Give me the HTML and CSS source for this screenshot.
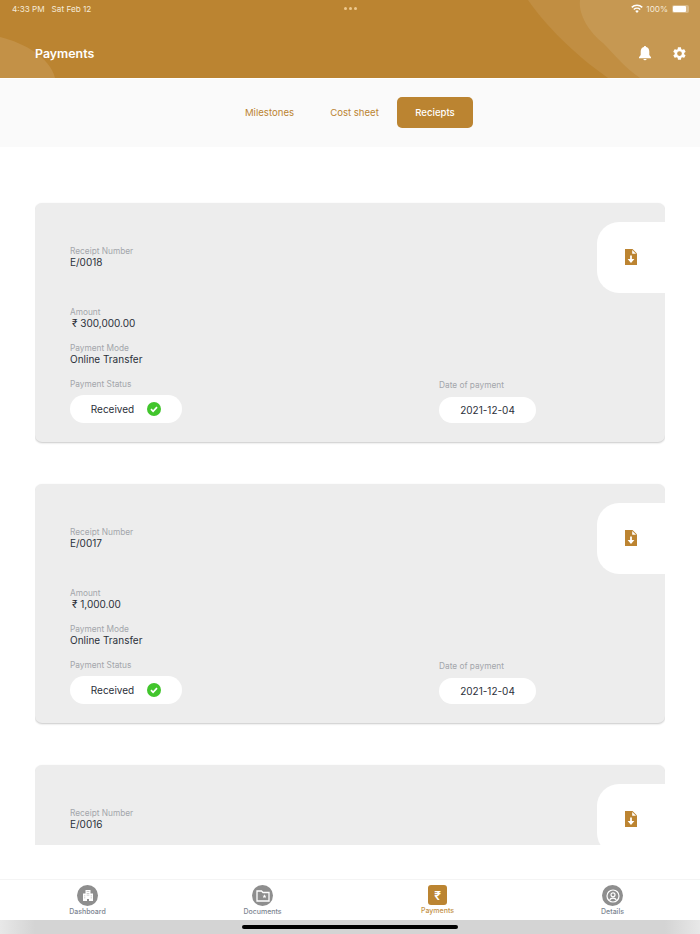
FILE: index.html
```html
<!DOCTYPE html>
<html lang="en">
<head>
  <meta charset="UTF-8">
  <title>Payments</title>
  <meta name="viewport" content="width=device-width, initial-scale=1.0">
  <link rel="stylesheet" href="styles.css">
</head>
<body>
  <div class="page">
    <header class="header">
      <svg class="header-waves" viewBox="0 0 700 78" preserveAspectRatio="none">
        <path d="M0 37C25 43 50 58 55 78H0Z" fill="#c39147"/>
        <path d="M528 0C545 25 575 55 608 78H700V0Z" fill="#c18e42"/>
        <path d="M580 0C578 15 590 33 603 43C615 55 625 68 640 78H700V0Z" fill="#c69852"/>
      </svg>
      <div class="status-bar">
        <span>4:33 PM&nbsp;&nbsp;&nbsp;Sat Feb 12</span>
        <span class="status-dots"><i></i><i></i><i></i></span>
        <span class="status-right">
          <svg width="12" height="9" viewBox="0 0 12 9"><path d="M6 9 4.2 7A2.6 2.6 0 0 1 7.8 7ZM3.3 6 2.3 4.9A5.4 5.4 0 0 1 9.7 4.9L8.7 6A4 4 0 0 0 3.3 6ZM1.3 3.9.2 2.8A8.4 8.4 0 0 1 11.8 2.8L10.7 3.9A6.9 6.9 0 0 0 1.3 3.9Z" fill="#fff"/></svg>
          100%
          <span class="battery"><span class="battery-fill"></span></span>
        </span>
      </div>
      <div class="title-row">
        <h1>Payments</h1>
        <div class="header-icons">
          <svg width="14" height="15" viewBox="0 0 14 15"><path d="M7 0C7.7 0 8.1.5 8.1 1.1 10.2 1.6 11.3 3.4 11.3 5.6V9L13 11.2V12.2H1V11.2L2.7 9V5.6C2.7 3.4 3.8 1.6 5.9 1.1 5.9.5 6.3 0 7 0ZM5.3 13H8.7A1.8 1.8 0 0 1 5.3 13Z" fill="#fff"/></svg>
          <svg width="15" height="15" viewBox="0 0 24 24"><path d="M19.4 13c.1-.3.1-.7.1-1s0-.7-.1-1l2.100-1.600c.2-.2.2-.4.1-.6l-2-3.500c-.1-.2-.4-.3-.6-.2l-2.500 1c-.5-.4-1.100-.7-1.700-1l-.4-2.700c0-.2-.2-.4-.5-.4h-4c-.3 0-.5.2-.5.4l-.4 2.700c-.6.3-1.200.6-1.700 1l-2.500-1c-.2-.1-.5 0-.6.2l-2 3.500c-.1.2-.1.4.1.6l2.100 1.600c-.1.3-.1.7-.1 1s0 .7.1 1l-2.100 1.600c-.2.2-.2.4-.1.6l2 3.500c.1.2.4.3.6.2l2.500-1c.5.4 1.100.7 1.700 1l.4 2.700c0 .2.2.4.5.4h4c.3 0 .5-.2.5-.4l.4-2.700c.6-.3 1.200-.6 1.700-1l2.500 1c.2.1.5 0 .6-.2l2-3.500c.1-.2.1-.4-.1-.6ZM12 15.800a3.800 3.800 0 1 1 0-7.600 3.800 3.800 0 0 1 0 7.600Z" fill="#fff"/></svg>
        </div>
      </div>
    </header>

    <nav class="tabs">
      <span class="tab">Milestones</span>
      <span class="tab">Cost sheet</span>
      <span class="tab tab-active">Reciepts</span>
    </nav>

    <main class="list">
      <section class="card">
        <div class="download">
          <svg width="12" height="16" viewBox="0 0 12 16"><path d="M0 0H7.5L12 4.500V16H0Z" fill="#bc8431"/><path d="M7.2 1 11 4.800H7.200Z" fill="#fff"/><path d="M5.1 6.500H6.900V10H9.400L6 14 2.600 10H5.100Z" fill="#fff"/></svg>
        </div>
        <div class="field field-number"><label>Receipt Number</label><p>E/0018</p></div>
        <div class="field"><label>Amount</label><p class="amount">₹ 300,000.00</p></div>
        <div class="field"><label>Payment Mode</label><p>Online Transfer</p></div>
        <div class="card-bottom">
          <div class="field">
            <label>Payment Status</label>
            <div class="pill pill-status">Received
              <svg width="14" height="14" viewBox="0 0 14 14"><circle cx="7" cy="7" r="7" fill="#41c52c"/><path d="M4 7.2 6.100 9.300 10 5.200" fill="none" stroke="#fff" stroke-width="1.700"/></svg>
            </div>
          </div>
          <div class="field field-date">
            <label>Date of payment</label>
            <div class="pill pill-date">2021-12-04</div>
          </div>
        </div>
      </section>

      <section class="card">
        <div class="download">
          <svg width="12" height="16" viewBox="0 0 12 16"><path d="M0 0H7.5L12 4.500V16H0Z" fill="#bc8431"/><path d="M7.2 1 11 4.800H7.200Z" fill="#fff"/><path d="M5.1 6.500H6.900V10H9.400L6 14 2.600 10H5.100Z" fill="#fff"/></svg>
        </div>
        <div class="field field-number"><label>Receipt Number</label><p>E/0017</p></div>
        <div class="field"><label>Amount</label><p class="amount">₹ 1,000.00</p></div>
        <div class="field"><label>Payment Mode</label><p>Online Transfer</p></div>
        <div class="card-bottom">
          <div class="field">
            <label>Payment Status</label>
            <div class="pill pill-status">Received
              <svg width="14" height="14" viewBox="0 0 14 14"><circle cx="7" cy="7" r="7" fill="#41c52c"/><path d="M4 7.2 6.100 9.300 10 5.200" fill="none" stroke="#fff" stroke-width="1.700"/></svg>
            </div>
          </div>
          <div class="field field-date">
            <label>Date of payment</label>
            <div class="pill pill-date">2021-12-04</div>
          </div>
        </div>
      </section>

      <section class="card">
        <div class="download">
          <svg width="12" height="16" viewBox="0 0 12 16"><path d="M0 0H7.5L12 4.500V16H0Z" fill="#bc8431"/><path d="M7.2 1 11 4.800H7.200Z" fill="#fff"/><path d="M5.1 6.500H6.900V10H9.400L6 14 2.600 10H5.100Z" fill="#fff"/></svg>
        </div>
        <div class="field field-number"><label>Receipt Number</label><p>E/0016</p></div>
      </section>
    </main>

    <footer class="bottom-nav">
      <a class="nav-item">
        <span class="nav-icon">
          <svg width="12" height="12" viewBox="0 0 12 12"><path d="M3.500 0H8.500V3.500H11V11H7V9H5V11H1V3.500H3.500Z" fill="#fff"/><path d="M4.800 1.200H5.600V2H4.800ZM6.400 1.200H7.200V2H6.400ZM4.800 3H5.600V3.800H4.800ZM6.400 3H7.200V3.800H6.400ZM4.800 4.800H5.600V5.600H4.800ZM6.400 4.800H7.200V5.600H6.400ZM2.400 5.500H3.200V6.300H2.400ZM8.800 5.500H9.600V6.300H8.800ZM2.400 7.500H3.200V8.300H2.400ZM8.800 7.500H9.600V8.300H8.800Z" fill="#8e8e8e"/></svg>
        </span>
        Dashboard
      </a>
      <a class="nav-item">
        <span class="nav-icon">
          <svg width="14" height="12" viewBox="0 0 14 12"><path d="M1 1H5.500L7 2.500H13V11H1Z" fill="none" stroke="#fff" stroke-width="1.300"/><path d="M8.500 4.300 9.100 5.700H10.500L9.400 6.700 9.800 8.200 8.500 7.300 7.200 8.200 7.600 6.700 6.500 5.700H7.900Z" fill="#fff"/></svg>
        </span>
        Documents
      </a>
      <a class="nav-item nav-item-active">
        <span class="nav-icon">₹</span>
        Payments
      </a>
      <a class="nav-item">
        <span class="nav-icon">
          <svg width="14" height="14" viewBox="0 0 14 14"><circle cx="7" cy="7" r="6" fill="none" stroke="#fff" stroke-width="1.200"/><circle cx="7" cy="5.800" r="2" fill="none" stroke="#fff" stroke-width="1.200"/><path d="M3.700 11C4.300 9.500 5.500 9.100 7 9.100S9.700 9.500 10.300 11" fill="none" stroke="#fff" stroke-width="1.200"/></svg>
        </span>
        Details
      </a>
    </footer>

    <div class="home-area"><span class="home-bar"></span></div>
  </div>
</body>
</html>
```

FILE: styles.css
```css
* {
  box-sizing: border-box;
}

body {
  margin: 0;
  font-family: Inter, "Liberation Sans", sans-serif;
  background: #fff;
  color: #2b303a;
}

.page {
  display: flex;
  flex-direction: column;
  height: 934px;
  overflow: hidden;
}

/* header */
.header {
  position: relative;
  height: 79px;
  background: #bb8431;
  border-bottom: 1px solid #fff;
  color: #fff;
}

.header-waves {
  position: absolute;
  top: 0;
  left: 0;
  width: 100%;
  height: 78px;
}

.status-bar {
  position: relative;
  display: grid;
  grid-template-columns: 1fr auto 1fr;
  align-items: center;
  height: 17px;
  padding: 0 11px 0 12px;
  font-size: 8.2px;
  color: #f5ead9;
}

.status-dots {
  display: flex;
  gap: 2px;
}

.status-dots i {
  width: 3px;
  height: 3px;
  border-radius: 50%;
  background: #eec98f;
}

.status-right {
  display: flex;
  justify-content: flex-end;
  align-items: center;
  gap: 3px;
}

.battery {
  display: block;
  width: 17px;
  height: 8px;
  padding: 1px;
  margin-left: 1px;
  border-radius: 2px;
  background: rgba(255, 255, 255, 0.3);
}

.battery-fill {
  display: block;
  width: 13px;
  height: 6px;
  border-radius: 1px;
  background: #fff;
}

.title-row {
  position: relative;
  display: flex;
  justify-content: space-between;
  align-items: center;
  height: 32px;
  margin-top: 20px;
  padding: 0 13px 0 35px;
}

h1 {
  margin: 0;
  font-size: 12.4px;
  font-weight: 600;
}

.header-icons {
  display: flex;
  align-items: center;
  gap: 20px;
}

/* tabs */
.tabs {
  display: flex;
  justify-content: center;
  align-items: center;
  height: 68px;
  padding-bottom: 2px;
  background: #fafafa;
}

.tab {
  display: flex;
  justify-content: center;
  align-items: center;
  width: 85px;
  height: 31px;
  border-radius: 5px;
  font-size: 9.6px;
  color: #bb8431;
}

.tab-active {
  width: 76px;
  background: #bb8431;
  color: #fff;
  font-weight: 500;
}

/* receipts */
.list {
  flex: none;
  height: 698px;
  margin: 0 35px;
  padding-top: 56px;
  overflow: hidden;
}

.card {
  position: relative;
  height: 239px;
  margin-bottom: 42px;
  padding: 43px 35px 0;
  border-radius: 7px;
  background: #ededed;
  box-shadow: 0 1px 2px rgba(0, 0, 0, 0.22);
}

.download {
  position: absolute;
  top: 19px;
  right: 0;
  display: flex;
  justify-content: center;
  align-items: center;
  width: 68px;
  height: 71px;
  padding-bottom: 1px;
  border-radius: 22px 0 0 22px;
  background: #fff;
}

.field {
  margin-bottom: 14px;
}

.field-number {
  margin-bottom: 39px;
}

.field label {
  display: block;
  font-size: 8.3px;
  line-height: 11px;
  color: #a3a6ab;
}

.field p {
  margin: 0;
  font-size: 10px;
  line-height: 11px;
}

.amount {
  padding-left: 2px;
}

.card-bottom {
  display: flex;
  align-items: flex-start;
}

.field-date {
  margin-left: 257px;
  padding-top: 1px;
}

.pill {
  display: flex;
  justify-content: center;
  align-items: center;
  border-radius: 14px;
  background: #fff;
  font-size: 10px;
}

.pill-status {
  gap: 13px;
  width: 112px;
  height: 28px;
  margin-top: 5px;
}

.pill-date {
  width: 97px;
  height: 26px;
  margin-top: 6px;
}

/* bottom nav */
.bottom-nav {
  display: grid;
  grid-template-columns: repeat(4, 175px);
  height: 41px;
  margin-top: 34px;
  padding-top: 5px;
  border-top: 1px solid #f4f4f4;
  background: #fff;
}

.nav-item {
  display: flex;
  flex-direction: column;
  align-items: center;
  gap: 1px;
  font-size: 7px;
  font-weight: 500;
  line-height: 9px;
  color: #7c8591;
}

.nav-icon {
  display: flex;
  justify-content: center;
  align-items: center;
  width: 21px;
  height: 21px;
  border-radius: 50%;
  background: #8e8e8e;
}

.nav-item-active {
  color: #c39147;
}

.nav-item-active .nav-icon {
  width: 19px;
  height: 20px;
  border-radius: 3px;
  background: #bb8431;
  color: #fff;
  font-size: 12px;
  font-weight: 600;
}

.home-area {
  display: flex;
  justify-content: center;
  align-items: center;
  height: 14px;
  background: linear-gradient(to right, #e8e8e8, #d4d4d4 5%, #d4d4d4 95%, #e8e8e8);
}

.home-bar {
  width: 216px;
  height: 4px;
  border-radius: 2px;
  background: #000;
}
```
